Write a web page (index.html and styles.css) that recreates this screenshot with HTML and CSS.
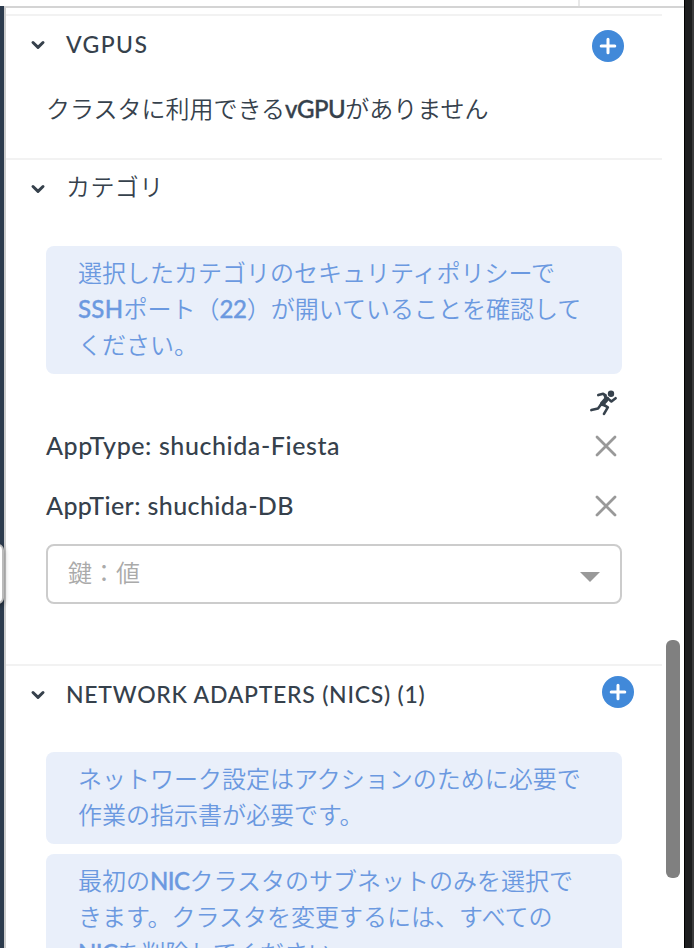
FILE: index.html
```
<!DOCTYPE html>
<html lang="ja">
<head>
<meta charset="utf-8">
<title>VM</title>
<link rel="stylesheet" href="styles.css">
</head>
<body>
<div class="window">
  <div class="topbar"><div class="tab"></div></div>
  <div class="main">
    <div class="backdrop"><div class="handle"></div></div>
    <div class="panel">
      <section class="section vgpus">
        <header class="head">
          <svg class="chevron" viewBox="0 0 16 12"><path d="M3 3.5L8 8.3L13 3.5"/></svg>
          <h2 class="title t-vgpus">VGPUS</h2>
          <button class="add"><svg viewBox="0 0 32 32"><path d="M16 9.2V22.8M9.2 16H22.8"/></svg></button>
        </header>
        <p class="empty">クラスタに利用できる<b class="vgpu">vGPU</b>がありません</p>
      </section>
      <section class="section categories">
        <header class="head">
          <svg class="chevron" viewBox="0 0 16 12"><path d="M3 3.5L8 8.3L13 3.5"/></svg>
          <h2 class="title jp">カテゴリ</h2>
        </header>
        <div class="note">選択したカテゴリのセキュリティポリシーで<br><b class="ssh">SSH</b>ポート（<b class="port">22</b>）が開いていることを確認して<br>ください。</div>
        <div class="tools">
          <svg class="runner" viewBox="0 0 28 26"><circle cx="21" cy="3.8" r="3.2" class="fill"/><path class="fill" d="M13 4L19 7.4L17.8 11.5L15.2 14.2L16.5 17L9.4 15.6L10.2 12.6L14.2 8Z"/><path d="M15.6 5.4L13.2 3.8L8.3 5.1M17.8 8.5L21.4 11.5L25.6 8.2M11 14.5L8 18.5L1.4 20.1M13.5 14.6L17.8 17.4L14 23.8"/></svg>
        </div>
        <div class="row"><span class="type">AppType: shuchida-Fiesta</span><svg class="close" viewBox="0 0 24 24"><path d="M3 3L21 21M21 3L3 21"/></svg></div>
        <div class="row"><span class="tier">AppTier: shuchida-DB</span><svg class="close" viewBox="0 0 24 24"><path d="M3 3L21 21M21 3L3 21"/></svg></div>
        <div class="select"><span class="placeholder">鍵：値</span><svg class="caret" viewBox="0 0 20 10"><path d="M0 0H20L10 10Z"/></svg></div>
      </section>
      <section class="section nics">
        <header class="head">
          <svg class="chevron" viewBox="0 0 16 12"><path d="M3 3.5L8 8.3L13 3.5"/></svg>
          <h2 class="title t-nics">NETWORK ADAPTERS (NICS) (1)</h2>
          <button class="add"><svg viewBox="0 0 32 32"><path d="M16 9.2V22.8M9.2 16H22.8"/></svg></button>
        </header>
        <div class="note">ネットワーク設定はアクションのために必要で<br>作業の指示書が必要です。</div>
        <div class="note">最初の<b class="nic">NIC</b>クラスタのサブネットのみを選択で<br>きます。クラスタを変更するには、すべての<br><b class="nic">NIC</b>を削除してください。</div>
      </section>
      <div class="scrollbar"></div>
    </div>
  </div>
  <div class="edge"></div>
</div>
</body>
</html>
```
FILE: styles.css
```
* { box-sizing: border-box; }
body { margin: 0; background: #fff; color: #36414c; font: 350 24px/36px "Noto Sans CJK JP", sans-serif; }
.window { display: grid; grid-template: 6px 942px / 684px 10px; height: 948px; overflow: hidden; }
.topbar { display: flex; justify-content: flex-end; }
.tab { width: 106px; border-left: 2px solid #e8e8e8; }
.edge { grid-area: 1 / 2 / 3 / 3; background: #1d1e1f; border-left: 1px solid #000; border-right: 2px solid #3b3b3c; }
.main { display: flex; overflow: hidden; }
.backdrop { position: relative; width: 4px; background: #2c3b4d; }
.handle { position: absolute; z-index: 1; top: 538px; left: -12px; width: 16px; height: 60px; background: #fff; border: 2px solid #bbb; border-radius: 6px; box-shadow: 0 2px 5px #0007; }
.panel { position: relative; width: 680px; padding-top: 6px; border-top: 2px solid #d4d4d4; border-left: 2px solid #ccc; }
.section { width: 656px; border-top: 2px solid #f2f2f2; }
.vgpus { height: 144px; }
.categories { height: 506px; }
.head { display: flex; align-items: center; height: 60px; padding: 0 38px 0 24px; }
.chevron { width: 16px; height: 12px; margin: -2px 20px 0 0; fill: none; stroke: #36414c; stroke-width: 3; stroke-linecap: round; stroke-linejoin: round; }
.title { margin: 0; font: 500 23px/36px Lato, sans-serif; white-space: nowrap; }
.title.jp { font: 350 24px/36px "Noto Sans CJK JP", sans-serif; margin-top: -8px; letter-spacing: .4px; }
.t-vgpus { margin-top: -4px; letter-spacing: 1.4px; }
.t-nics { letter-spacing: .74px; }
.add { width: 32px; height: 32px; margin-left: auto; padding: 0; border: 0; border-radius: 50%; background: #4189d9; }
.add svg { display: block; width: 32px; height: 32px; fill: none; stroke: #fff; stroke-width: 3; stroke-linecap: round; }
.nics .head { padding-right: 28px; height: 52px; }
.nics .chevron { margin-top: 6px; }
.nics .title { margin-top: 3px; }
b { font: 500 24px/1 Lato, sans-serif; -webkit-text-stroke: .35px currentColor; }
.vgpu { letter-spacing: -.5px; }
.ssh { letter-spacing: .3px; }
.port { letter-spacing: -.3px; }
.nic { letter-spacing: -.6px; }
.empty { margin: 14px 0 0 40px; white-space: nowrap; }
.note { width: 576px; margin-left: 40px; padding: 8px 32px 12px; border-radius: 8px; background: #e9effa; color: #6b99e0; white-space: nowrap; }
.categories .note { margin-top: 26px; }
.nics .note { margin-top: 34px; }
.nics .note + .note { margin-top: 10px; }
.tools { display: flex; height: 42px; padding: 16px 0 0 584px; }
.runner { width: 28px; height: 26px; fill: none; stroke: #36414c; stroke-width: 2.6; stroke-linecap: round; stroke-linejoin: round; }
.fill { fill: #36414c; stroke: none; }
.row { display: flex; justify-content: space-between; align-items: center; width: 576px; height: 60px; margin-left: 40px; padding-right: 4px; font: 500 25px/36px Lato, sans-serif; }
.row span { margin-top: -2px; }
.type { letter-spacing: .58px; }
.tier { letter-spacing: .4px; }
.close { width: 24px; height: 24px; fill: none; stroke: #999; stroke-width: 2.8; stroke-linecap: round; }
.select { display: flex; justify-content: space-between; align-items: center; width: 576px; height: 60px; margin: 8px 0 0 40px; padding: 0 20px; border: 2px solid #ccc; border-radius: 8px; color: #aaa; }
.placeholder { margin-top: -4px; }
.caret { width: 20px; height: 10px; margin-top: 6px; fill: #999; }
.scrollbar { position: absolute; top: 632px; left: 660px; width: 14px; height: 238px; border-radius: 6px; background: #808080; }
```
